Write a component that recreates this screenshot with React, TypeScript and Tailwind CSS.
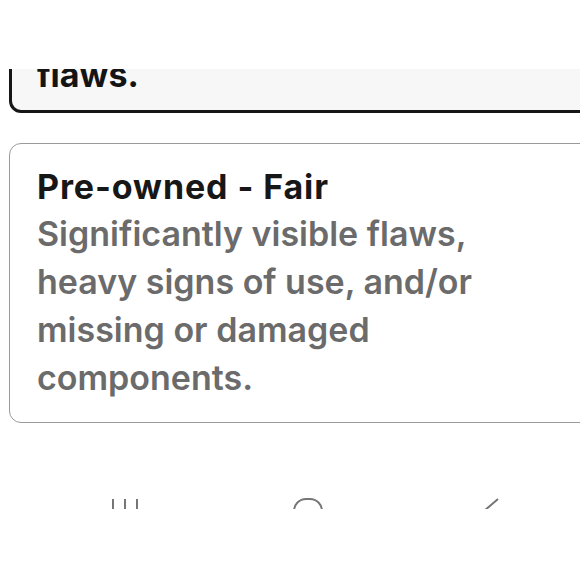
import React from 'react';

const conditions = [
  {
    id: 'good',
    title: 'Pre-owned - Good',
    lines: ['Some signs of wear and/or', 'light cosmetic scratches or', 'flaws.'],
  },
  {
    id: 'fair',
    title: 'Pre-owned - Fair',
    lines: ['Significantly visible flaws,', 'heavy signs of use, and/or', 'missing or damaged', 'components.'],
  },
];

const NavIcons = () => (
  <div className="ml-[33px] grid w-[549px] grid-cols-3 pt-[29px]">
    {/* Recents */}
    <div className="flex h-[11px] justify-center overflow-hidden">
      <svg width="26" height="24" viewBox="0 0 26 24" fill="none" stroke="#767676" strokeWidth="2">
        <path d="M1 1v22M13 1v22M25 1v22" />
      </svg>
    </div>
    {/* Home */}
    <div className="flex h-[11px] justify-center overflow-hidden">
      <svg width="30" height="30" viewBox="0 0 30 30" fill="none" stroke="#767676" strokeWidth="2">
        <rect x="1" y="1" width="28" height="28" rx="12" />
      </svg>
    </div>
    {/* Back */}
    <div className="flex h-[11px] justify-center overflow-hidden">
      <svg width="18" height="28" viewBox="0 0 18 28" fill="none" stroke="#767676" strokeWidth="2">
        <path d="M16 1L2 13l14 13" />
      </svg>
    </div>
  </div>
);

export default function App() {
  const [good, fair] = conditions;

  return (
    <div
      className="flex h-[580px] w-[580px] flex-col overflow-hidden bg-white"
      style={{ fontFamily: 'Inter, "Noto Sans", sans-serif' }}
    >
      {/* Header */}
      <div className="h-[69px] shrink-0 bg-white" />

      {/* Scrolled list */}
      <div className="flex h-[400px] shrink-0 flex-col pl-[9px]">
        {/* Selected card, scrolled mostly out of view */}
        <div className="flex h-[44px] shrink-0 flex-col justify-end overflow-hidden">
          <div className="w-[620px] shrink-0 rounded-[12px] border-[3px] border-[#161616] bg-[#f7f7f7] pb-[11px] pl-[25px] pt-[18px]">
            <div className="text-[34px] font-bold leading-[46px] tracking-[0.9px] text-[#141414]">{good.title}</div>
            {good.lines.map((l) => (
              <div key={l} className="text-[34px] font-bold leading-[48px] text-[#141414]">
                {l}
              </div>
            ))}
          </div>
        </div>

        <div className="mt-[30px] w-[620px] shrink-0 rounded-[12px] border border-[#9a9a9a] bg-white pb-[20px] pl-[27px] pt-[20px]">
          <div className="text-[34px] font-bold leading-[46px] tracking-[0.9px] text-[#171717]">{fair.title}</div>
          {fair.lines.map((l) => (
            <div key={l} className="text-[34px] font-semibold leading-[48px] text-[#6b6b6b]">
              {l}
            </div>
          ))}
        </div>
      </div>

      {/* Navigation bar */}
      <NavIcons />
    </div>
  );
}
